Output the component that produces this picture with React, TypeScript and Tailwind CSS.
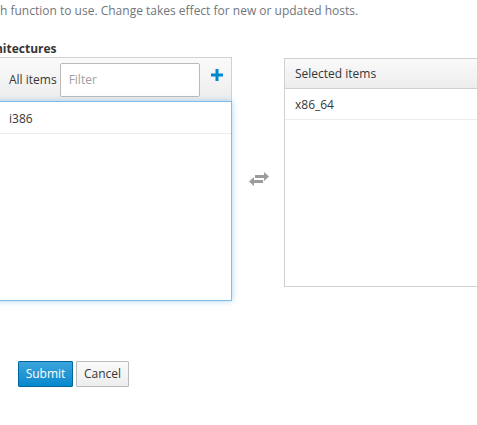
function ExchangeIcon() {
  return (
    <svg width="22" height="16" viewBox="0 0 22 16" fill="#9a9c9e">
      <path d="M7 4h9V1l5 4.5-5 4.5V7H7z" />
      <path d="M15 9H6V6l-5 4.5L6 15v-3h9z" />
    </svg>
  )
}

function PlusIcon() {
  return (
    <svg width="12" height="12" viewBox="0 0 12 12" fill="#0088ce">
      <path d="M4.5 0h3v4.5H12v3H7.5V12h-3V7.5H0v-3h4.5z" />
    </svg>
  )
}

export default function App() {
  return (
    <div className="w-[477px] h-[425px] overflow-hidden bg-white text-[12px] text-[#363636]" style={{ fontFamily: '"Open Sans", "Liberation Sans", sans-serif' }}>
      <p className="pt-[2px] leading-[18px] text-[#72767b] whitespace-nowrap">h function to use. Change takes effect for new or updated hosts.</p>

      <div className="mt-[20px] -ml-[25px] font-bold leading-[18px] whitespace-nowrap">Architectures</div>

      <div className="-mt-[1px] flex items-start">
        <div className="-ml-[10px] w-[242px] shrink-0 flex flex-col">
          <div className="h-[44px] flex items-center gap-[3px] pl-[18px] pr-[10px] border border-b-0 border-[#d1d1d1] bg-gradient-to-b from-[#fafafa] to-[#ededed]">
            <span className="whitespace-nowrap">All items</span>
            <input
              className="w-[140px] h-[34px] px-[8px] border border-[#bababa] rounded-[2px] bg-white outline-none placeholder:text-[#a0a0a0]"
              placeholder="Filter"
            />
            <span className="ml-[8px] mb-[10px]"><PlusIcon /></span>
          </div>
          <div className="h-[200px] border border-[#7dbde8] bg-white shadow-[0_0_6px_rgba(102,175,233,0.55)]">
            <div className="h-[32px] flex items-center pt-[2px] pl-[18px] border-b border-[#ededed]">i386</div>
          </div>
        </div>

        <div className="w-[52px] shrink-0 flex justify-center pt-[114px] pl-[2px]">
          <ExchangeIcon />
        </div>

        <div className="w-[210px] shrink-0 mt-[1px] h-[229px] border border-[#d1d1d1] bg-white flex flex-col">
          <div className="h-[30px] flex items-center pl-[10px] border-b border-[#d1d1d1] bg-gradient-to-b from-[#fafafa] to-[#ededed]">Selected items</div>
          <div className="h-[31px] flex items-center pt-[1px] pl-[10px] border-b border-[#ededed]">x86_64</div>
        </div>
      </div>

      <div className="mt-[60px] ml-[18px] flex gap-[3px]">
        <button className="w-[55px] h-[26px] rounded-[1px] border border-[#00659c] bg-gradient-to-b from-[#39a5dc] to-[#0088ce] text-white">Submit</button>
        <button className="w-[53px] h-[26px] rounded-[1px] border border-[#bbbbbb] bg-gradient-to-b from-[#fafafa] to-[#ededed] text-[#363636]">Cancel</button>
      </div>
    </div>
  )
}
